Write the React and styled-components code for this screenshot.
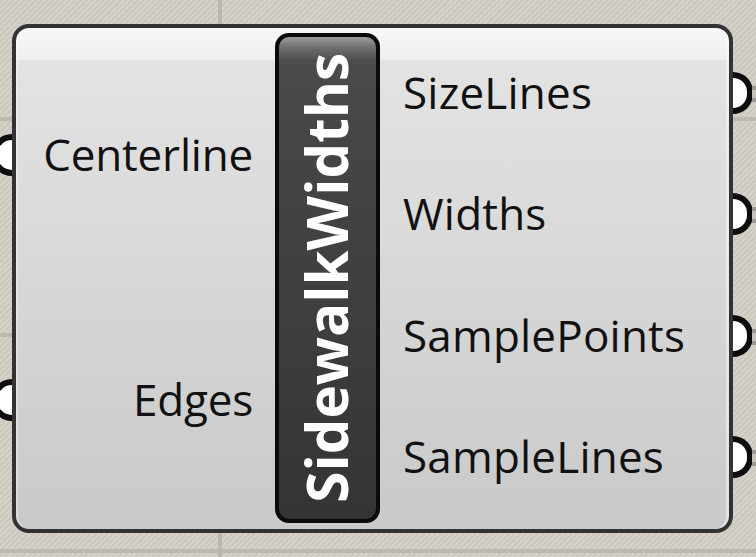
import React from "react";
import styled, { createGlobalStyle } from "styled-components";

const GlobalStyle = createGlobalStyle`
  html, body {
    margin: 0;
    padding: 0;
    background: #d4d0c8;
  }
  body {
    font-family: "Open Sans", "Noto Sans", sans-serif;
  }
`;

const inputs = ["Centerline", "Edges"];
const outputs = ["SizeLines", "Widths", "SamplePoints", "SampleLines"];

function App() {
  return (
    <>
      <GlobalStyle />
      <Canvas>
        <Node>
          <InputColumn>
            {inputs.map((name) => (
              <ParamRow key={name} $side="in">
                <InGrip />
                <Label $spacing={-0.2}>{name}</Label>
              </ParamRow>
            ))}
          </InputColumn>
          <NameTab>
            <NameText>SidewalkWidths</NameText>
          </NameTab>
          <OutputColumn>
            {outputs.map((name) => (
              <ParamRow key={name} $side="out">
                <Label $spacing={0.2}>{name}</Label>
                <OutGrip />
                <WireStub />
              </ParamRow>
            ))}
          </OutputColumn>
        </Node>
      </Canvas>
    </>
  );
}

const Canvas = styled.div`
  position: relative;
  width: 756px;
  height: 557px;
  overflow: hidden;
  box-sizing: border-box;
  padding: 24px 0 0 12px;
  background-color: #d4d0c8;
  background-image: linear-gradient(
      to right,
      transparent 218px,
      #bbb7af 218px,
      #bbb7af 222px,
      transparent 222px
    ),
    linear-gradient(
      to bottom,
      transparent 117px,
      #bdb9b1 117px,
      #bdb9b1 121px,
      transparent 121px,
      transparent 333px,
      #bdb9b1 333px,
      #bdb9b1 337px,
      transparent 337px,
      transparent 549px,
      #bdb9b1 549px,
      #bdb9b1 553px,
      transparent 553px
    ),
    repeating-linear-gradient(
      -45deg,
      #d6d2ca 0px,
      #d6d2ca 2px,
      #ccc8c0 2px,
      #ccc8c0 4px
    );
`;

const Node = styled.div`
  position: relative;
  width: 721px;
  height: 509px;
  box-sizing: border-box;
  display: flex;
  padding: 5px 0 6px;
  border: 4px solid #333333;
  border-radius: 17px;
  background: linear-gradient(
    to bottom,
    #f8f8f8 0px,
    #efefef 31px,
    #e3e3e3 33px,
    #dadada 200px,
    #c9c9c9 100%
  );
  box-shadow: inset 2px 0 0 rgba(255, 255, 255, 0.35),
    inset -3px 0 0 rgba(255, 255, 255, 0.45);
`;

const InputColumn = styled.div`
  width: 259px;
  display: flex;
  flex-direction: column;
  padding-right: 22px;
  box-sizing: border-box;
`;

const OutputColumn = styled.div`
  flex: 1;
  display: flex;
  flex-direction: column;
  padding: 0 0 4px 23px;
`;

const ParamRow = styled.div`
  position: relative;
  flex: 1;
  display: flex;
  align-items: center;
  justify-content: ${(p) => (p.$side === "in" ? "flex-end" : "flex-start")};
`;

const Label = styled.span`
  position: relative;
  top: -2px;
  font-family: "Open Sans", "Noto Sans", sans-serif;
  font-size: 44px;
  line-height: 1;
  color: #111111;
  letter-spacing: ${(p) => p.$spacing}px;
`;

const InGrip = styled.span`
  position: absolute;
  left: -25px;
  top: 50%;
  width: 21px;
  height: 42px;
  margin-top: -22px;
  box-sizing: border-box;
  border: 6px solid #0d0d0d;
  border-right: none;
  border-radius: 21px 0 0 21px;
  background: #ffffff;
`;

const OutGrip = styled.span`
  position: absolute;
  right: -24px;
  top: 50%;
  width: 20px;
  height: 42px;
  margin-top: -22px;
  box-sizing: border-box;
  border: 6px solid #0d0d0d;
  border-left: none;
  border-radius: 0 21px 21px 0;
  background: #ffffff;
`;

const WireStub = styled.span`
  position: absolute;
  right: -30px;
  top: 50%;
  width: 7px;
  height: 16px;
  margin-top: -8px;
  box-sizing: border-box;
  border-top: 4px solid #9a9894;
  border-bottom: 4px solid #9a9894;
  background: #c4c1ba;
`;

const NameTab = styled.div`
  width: 105px;
  box-sizing: border-box;
  display: flex;
  align-items: center;
  justify-content: center;
  border: 4px solid #0a0a0a;
  border-radius: 14px;
  background: linear-gradient(
    to bottom,
    #9c9c9c 0px,
    #6a6a6a 12px,
    #4c4c4c 24px,
    #474747 60px,
    #3f3f3f 260px,
    #343434 100%
  );
`;

const NameText = styled.span`
  writing-mode: vertical-rl;
  transform: rotate(180deg);
  font-family: "Open Sans", "Noto Sans", sans-serif;
  font-weight: 700;
  font-size: 56.5px;
  line-height: 1;
  color: #ffffff;
  white-space: nowrap;
`;

export default App;
